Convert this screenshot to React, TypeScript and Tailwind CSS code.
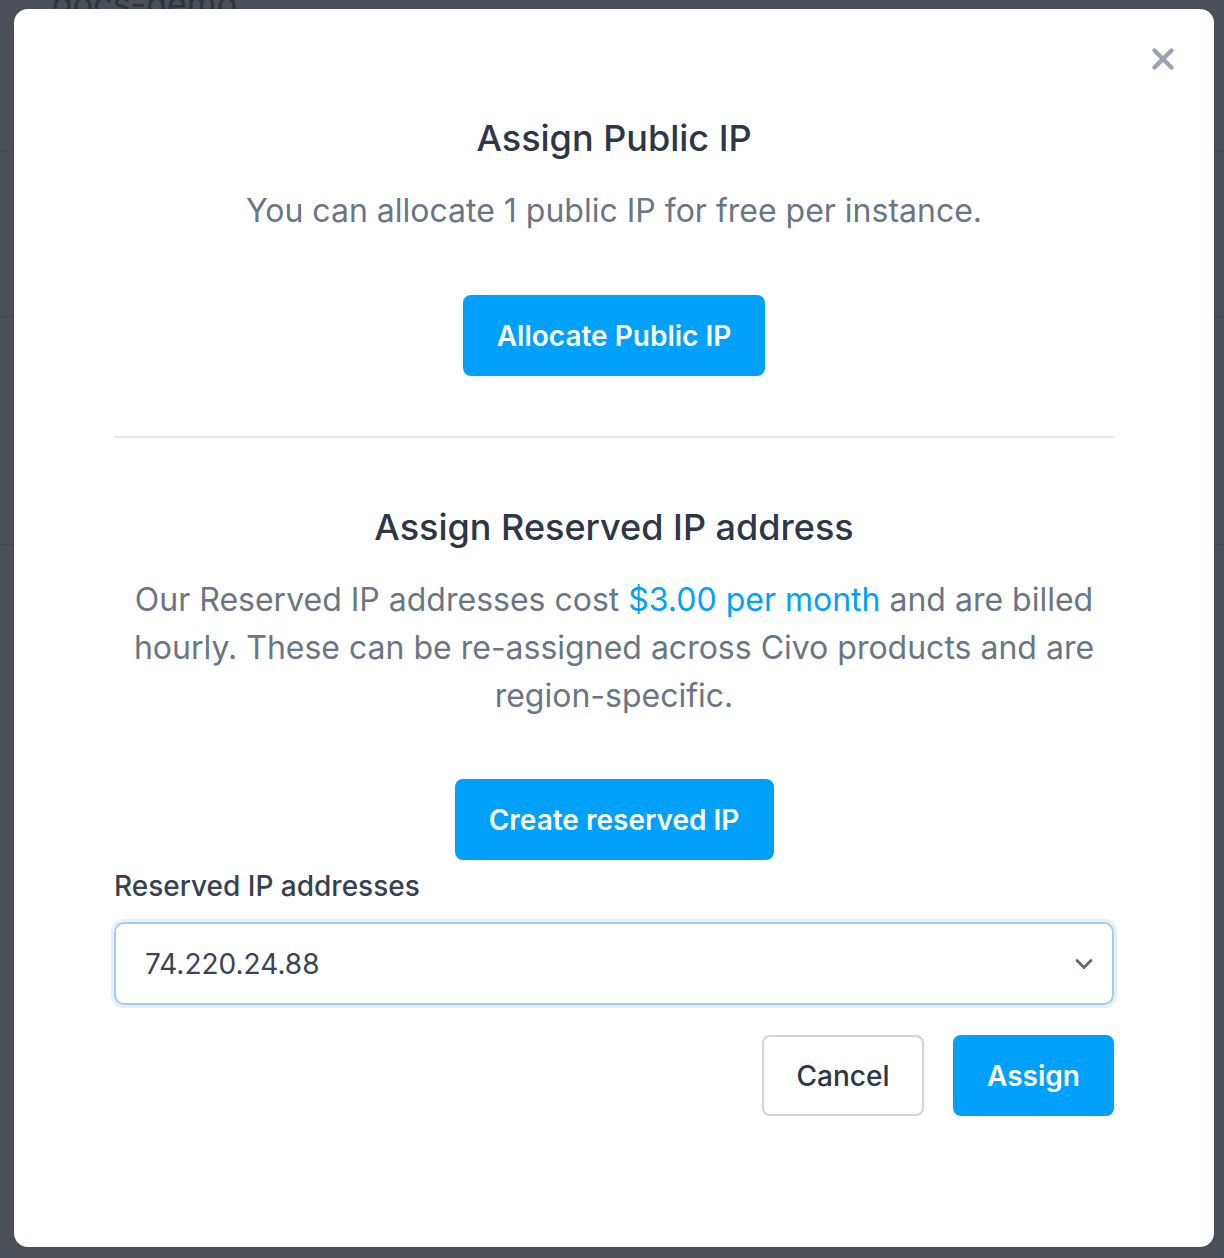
import { X, ChevronDown } from 'lucide-react';

export default function App() {
	return (
		<div
			className="relative h-[1258px] w-[1224px] overflow-hidden bg-[#4b4f58] pt-[9px] pl-[14px]"
			style={{ fontFamily: 'Inter, "Noto Sans", sans-serif' }}
		>
			{/* faint page behind the overlay */}
			<div className="absolute left-[52px] top-[-16px] text-[34px] leading-[40px] text-[#2f333a]">docs-demo</div>
			<div className="absolute left-0 top-[150px] h-px w-full bg-[#43474f]" />
			<div className="absolute left-0 top-[316px] h-px w-full bg-[#43474f]" />
			<div className="absolute left-0 top-[544px] h-px w-full bg-[#43474f]" />

			<div className="relative flex h-[1238px] w-[1200px] flex-col rounded-[14px] bg-white px-[100px] pt-[103px]">
				<button className="absolute right-[34px] top-[33px] text-[#9ca3af]">
					<X size={34} strokeWidth={3} />
				</button>

				<h2 className="text-center text-[36px] leading-[52px] font-medium text-[#2d3748]">
					Assign Public IP
				</h2>
				<p className="mt-[27px] text-center text-[32px] leading-[40px] text-[#6b7684]">
					You can allocate 1 public IP for free per instance.
				</p>
				<div className="mt-[64px] flex justify-center">
					<button className="h-[81px] w-[302px] rounded-[8px] bg-[#00a1fa] text-[28px] font-semibold text-white">
						Allocate Public IP
					</button>
				</div>

				<div className="mt-[60px] h-[2px] w-full bg-[#e5e7eb]" />

				<h2 className="mt-[63px] text-center text-[36px] leading-[52px] font-medium text-[#2d3748]">
					Assign Reserved IP address
				</h2>
				<p className="mt-[23px] text-center text-[32px] leading-[48px] text-[#6b7684]">
					Our Reserved IP addresses cost{' '}
					<span className="text-[#00a1fa]">$3.00 per month</span> and are billed hourly. These can be
					re-assigned across Civo products and are region-specific.
				</p>
				<div className="mt-[59px] flex justify-center">
					<button className="h-[81px] w-[319px] rounded-[8px] bg-[#00a1fa] text-[28px] font-semibold text-white">
						Create reserved IP
					</button>
				</div>

				<label className="mt-[6px] text-[28px] leading-[40px] font-medium text-[#374151]">
					Reserved IP addresses
				</label>
				<div className="mt-[16px] flex h-[83px] w-full items-center justify-between rounded-[10px] border-2 border-[#a9cbe9] pl-[29px] pr-[14px] shadow-[0_0_0_3px_#e6f0fa]">
					<span className="text-[28px] text-[#3b4452]">74.220.24.88</span>
					<ChevronDown size={28} strokeWidth={2.5} className="text-[#5f6b7a]" />
				</div>

				<div className="mt-[30px] flex justify-end gap-[29px]">
					<button className="h-[81px] w-[162px] rounded-[8px] border-2 border-[#d1d5db] bg-white text-[28px] font-medium text-[#2d3748]">
						Cancel
					</button>
					<button className="h-[81px] w-[161px] rounded-[8px] bg-[#00a1fa] text-[28px] font-semibold text-white">
						Assign
					</button>
				</div>
			</div>
		</div>
	);
}
